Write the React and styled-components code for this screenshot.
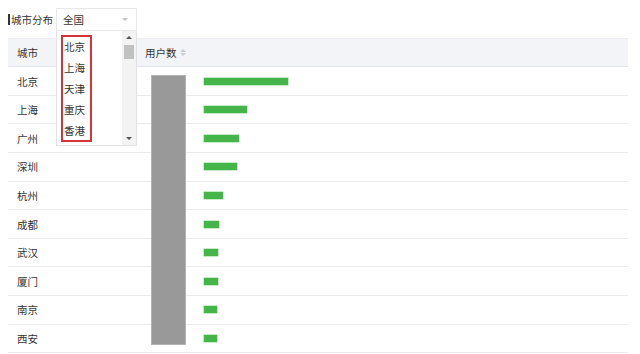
import React from "react";
import styled, { createGlobalStyle } from "styled-components";

const GlobalStyle = createGlobalStyle`
  html, body { margin: 0; padding: 0; background: #fff; }
  body {
    font-family: "Noto Sans CJK SC", "Noto Sans", sans-serif;
    color: #333;
    overflow: hidden;
  }
`;

const Page = styled.div`
  width: 640px;
  height: 354px;
  padding: 8px 12px 0 8px;
  box-sizing: border-box;
`;

const Toolbar = styled.div`
  display: flex;
  align-items: center;
  height: 23px;
  position: relative;
  z-index: 2;
`;

const Title = styled.div`
  border-left: 2px solid #333;
  height: 11px;
  line-height: 11px;
  padding-left: 1px;
  font-size: 10.5px;
  color: #333;
  white-space: nowrap;
`;

const Select = styled.div`
  position: relative;
  margin-left: 3px;
  width: 81px;
  height: 23px;
  box-sizing: border-box;
  border: 1px solid #e8e8e8;
  display: flex;
  align-items: center;
  justify-content: space-between;
  padding: 0 8px 0 6px;
  font-size: 10.5px;
  color: #333;
  background: #fff;
`;

const Caret = styled.span`
  width: 0;
  height: 0;
  border-left: 3px solid transparent;
  border-right: 3px solid transparent;
  border-top: 3px solid #c4c4c4;
`;

const Dropdown = styled.div`
  position: absolute;
  left: -1px;
  top: 22px;
  width: 81px;
  height: 115px;
  box-sizing: border-box;
  border: 1px solid #e2e2e2;
  border-top: none;
  background: #fff;
  display: flex;
`;

const Options = styled.div`
  flex: 1;
  padding: 4px 0 0 4px;
`;

const Highlight = styled.div`
  width: 31px;
  height: 107px;
  box-sizing: border-box;
  border: 2px solid #d8333b;
  padding: 0 0 0 1px;
  overflow: hidden;
`;

const Option = styled.div`
  height: 21px;
  line-height: 19px;
  font-size: 10.5px;
  color: #333;
  white-space: nowrap;
`;

const Scrollbar = styled.div`
  width: 14px;
  background: #f3f3f3;
  display: flex;
  flex-direction: column;
  align-items: center;
  padding-top: 5px;
  box-sizing: border-box;
`;

const Arrow = styled.span`
  width: 0;
  height: 0;
  border-left: 3px solid transparent;
  border-right: 3px solid transparent;
  ${(p) =>
    p.$up
      ? "border-bottom: 3px solid #555;"
      : "border-top: 3px solid #555; margin-top: auto; margin-bottom: 5px;"}
`;

const Thumb = styled.div`
  width: 10px;
  height: 14px;
  margin-top: 6px;
  background: #c1c1c1;
`;

const Table = styled.div`
  margin-top: 7.3px;
  width: 620px;
  position: relative;
`;

const HeaderRow = styled.div`
  display: grid;
  grid-template-columns: 128px 1fr;
  height: 29px;
  box-sizing: border-box;
  background: #f3f4f8;
  border-top: 1px solid #eceef1;
  border-bottom: 1px solid #e3e5ea;
  align-items: center;
  font-size: 10.5px;
  color: #333;
`;

const HeadCell = styled.div`
  padding-left: 9px;
  display: flex;
  align-items: center;
  gap: 3px;
`;

const Sort = styled.span`
  display: inline-flex;
  flex-direction: column;
  gap: 1px;
  &::before, &::after {
    content: "";
    width: 0;
    height: 0;
    border-left: 3px solid transparent;
    border-right: 3px solid transparent;
  }
  &::before { border-bottom: 3px solid #c9cbd0; }
  &::after { border-top: 3px solid #c9cbd0; }
`;

const Body = styled.div`
  position: relative;
`;

const Row = styled.div`
  display: grid;
  grid-template-columns: 128px 1fr;
  height: 28.6px;
  box-sizing: border-box;
  border-bottom: 1px solid #ebebee;
  align-items: center;
  font-size: 10.5px;
  color: #333;
  &:last-child { border-bottom: none; }
`;

const Cell = styled.div`
  padding-left: 9px;
`;

const BarCell = styled.div`
  padding-left: 68px;
  display: flex;
  align-items: center;
`;

const Bar = styled.div`
  height: 7px;
  background: #45b549;
  box-shadow: 0 0 0 0.5px #8fd592;
`;

const GrayBar = styled.div`
  position: absolute;
  left: 143px;
  top: 7.7px;
  width: 34.5px;
  height: 270px;
  box-sizing: border-box;
  background: #999;
  border: 1px solid #b3b3b3;
`;

const options = ["北京", "上海", "天津", "重庆", "香港"];

const rows = [
  ["北京", 84],
  ["上海", 42.5],
  ["广州", 35],
  ["深圳", 32.7],
  ["杭州", 19.4],
  ["成都", 15],
  ["武汉", 14.4],
  ["厦门", 14.4],
  ["南京", 13.4],
  ["西安", 12.7],
];

export default function App() {
  return (
    <Page>
      <GlobalStyle />
      <Toolbar>
        <Title>城市分布</Title>
        <Select>
          <span>全国</span>
          <Caret />
          <Dropdown>
            <Options>
              <Highlight>
                {options.map((o) => (
                  <Option key={o}>{o}</Option>
                ))}
              </Highlight>
            </Options>
            <Scrollbar>
              <Arrow $up />
              <Thumb />
              <Arrow />
            </Scrollbar>
          </Dropdown>
        </Select>
      </Toolbar>
      <Table>
        <HeaderRow>
          <HeadCell>城市</HeadCell>
          <HeadCell>
            用户数
            <Sort />
          </HeadCell>
        </HeaderRow>
        <Body>
          {rows.map(([city, w]) => (
            <Row key={city}>
              <Cell>{city}</Cell>
              <BarCell>
                <Bar style={{ width: `${w}px` }} />
              </BarCell>
            </Row>
          ))}
          <GrayBar />
        </Body>
      </Table>
    </Page>
  );
}
